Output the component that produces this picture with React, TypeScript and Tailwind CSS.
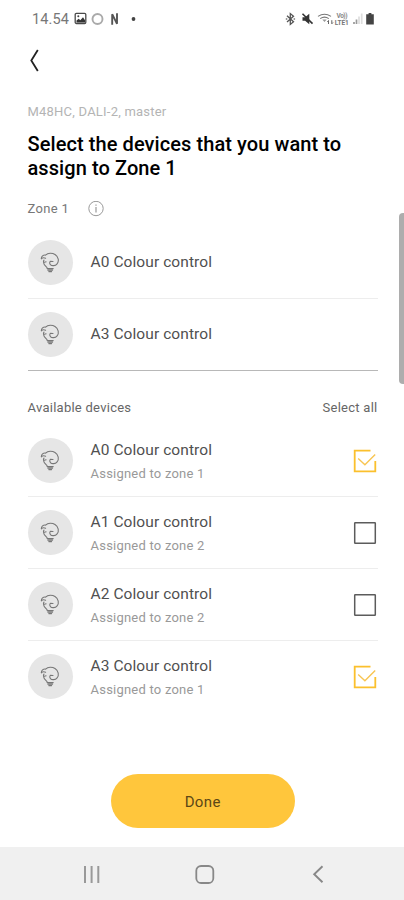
interface Device {
  name: string;
  zone: number;
}

const zoneDevices = ["A0 Colour control", "A3 Colour control"];

const availableDevices: Device[] = [
  { name: "A0 Colour control", zone: 1 },
  { name: "A1 Colour control", zone: 2 },
  { name: "A2 Colour control", zone: 2 },
  { name: "A3 Colour control", zone: 1 },
];

const StatusBar = () => (
  <div className="flex h-[38px] shrink-0 items-center pl-[32px] pr-[28px] text-[#555]">
    <span className="w-[42px] pt-[2px] text-[14.5px] leading-none tracking-[0.1px] whitespace-nowrap text-[#777]">
      14.54
    </span>
    <svg width="65" height="16" viewBox="0 0 65 16" fill="none">
      <rect x="1.2" y="2.3" width="10.6" height="10.2" rx="1.2" stroke="#4a4a4a" strokeWidth="1.3" />
      <path d="M2.5 11.5V9.5l2.2-1.7 1.6 1.4 2.7-3 2 3v2.3z" fill="#333" />
      <circle cx="4.3" cy="5.2" r="1" fill="#444" />
      <circle cx="23.5" cy="8" r="5" stroke="#aaa" strokeWidth="1.9" />
      <path d="M38.2 13.8V3.2l4.8 9.6V2.2" stroke="#555" strokeWidth="1.9" />
      <circle cx="59.5" cy="8" r="1.9" fill="#444" />
    </svg>
    <svg className="ml-auto" width="91" height="16" viewBox="0 0 91 16" fill="none">
      <path d="M2 4.8l6.5 6-3.2 2.6V2.6l3.2 2.6L2 11" stroke="#555" strokeWidth="1.3" />
      <path d="M.8 8h1.5M8.6 8h1.5" stroke="#777" strokeWidth="1.6" />
      <path d="M17.5 6.2h2.6l4.2-3.4v10.4l-4.2-3.4h-2.6z" fill="#333" />
      <path d="M17.5 2.8l10 9.8" stroke="#333" strokeWidth="1.6" />
      <path d="M33 5.4q6.5-4.4 13 0M35.2 7.6q4.3-3 8.6 0" stroke="#777" strokeWidth="1.1" />
      <path d="M37.3 8.6h4.4l-2.2 2.5z" fill="#999" />
      <path d="M43.5 13v-3.5l-1.2 1.3M46.8 9.2v3.6l1.2-1.3" stroke="#666" strokeWidth="1" />
      <text x="51.5" y="7.2" fill="#888" fontSize="6.5" fontWeight="700" textLength="11">Vo))</text>
      <text x="49.8" y="14" fill="#777" fontSize="6.5" fontWeight="700" textLength="14">LTE1</text>
      <path d="M69 11v2M71.5 8.5V13" stroke="#999" strokeWidth="1.7" />
      <path d="M74 5.5V13M76.7 2.5V13" stroke="#ddd" strokeWidth="1.7" />
      <path d="M81.2 3.2h2.4V2h2.8v1.2h2.4v10.4h-7.6z" fill="#444" />
    </svg>
  </div>
);

const BulbIcon = () => (
  <div className="flex size-[45px] shrink-0 items-center justify-center rounded-full bg-[#e6e6e6]">
    <svg width="22" height="24" viewBox="0 0 22 24" fill="none" stroke="#777" strokeWidth="1.1" strokeLinecap="round" strokeLinejoin="round">
      <path d="M2.4 7.7C2.2 5.2 4.3 3.8 6.6 4.1 9 1.7 13.2 1.7 16 3.5c3.6 2.4 4.3 6.6 2.1 9.3-1.8 2.2-5.2 2.4-6.7.8-.9-1-.8-2.3-.1-3.3l2.7.2" />
      <path d="M2.4 7.7c1.3-1.2 2.6-1.3 4.2-.5M5 9.2c-.6.7-.7 1.5-.4 2.3l2.5-.7M4.8 12.3c.5 2.1 2.6 3 3.5 4.9" />
      <path d="M8.2 17.6h6M8.8 19.1h4.8M9.8 20.6h2.8" />
    </svg>
  </div>
);

const Checkbox = ({ checked }: { checked: boolean }) => (
  <svg className="mr-[0.5px] ml-auto shrink-0" width="24" height="24" viewBox="0 0 24 24" fill="none">
    {checked ? (
      <>
        <path d="M17.5 1.7H1.7v20.6h20.6V12" stroke="#fbc02d" strokeWidth="1.8" />
        <path d="M5.2 9.5l6.7 6.3L22.2 5.4" stroke="#f8c552" strokeWidth="1.4" />
      </>
    ) : (
      <rect x="1.7" y="1.7" width="20.6" height="20.6" rx="0.5" stroke="#5c5c5c" strokeWidth="1.5" />
    )}
  </svg>
);

const NavigationBar = () => (
  <nav className="mt-auto h-[53px] shrink-0 bg-[#f0f0f0]">
    <svg width="404" height="53" viewBox="0 0 404 53" fill="none" stroke="#888">
      <path d="M85 19v17M91.6 19v17M98.3 19v17" stroke="#999" strokeWidth="2" />
      <rect x="196.3" y="19" width="17" height="17" rx="4.8" strokeWidth="1.8" />
      <path d="M322.5 19.3l-8.3 8 8.3 8" strokeWidth="1.9" />
    </svg>
  </nav>
);

export default function App() {
  return (
    <div className="relative flex h-[900px] w-[404px] flex-col overflow-hidden bg-white font-['Roboto',sans-serif] text-[#444]">
      <StatusBar />

      <main className="flex flex-col pl-[27.5px] pr-[26.5px]">
        <button type="button" aria-label="Back" className="flex h-[45px] items-center">
          <svg width="14" height="24" viewBox="0 0 14 24" fill="none">
            <path d="M9.8 1L3.3 11.5l6.5 10.5" stroke="#222" strokeWidth="1.8" />
          </svg>
        </button>

        <p className="mt-[19px] h-5 text-[13px] leading-5 tracking-[0.22px] whitespace-nowrap text-[#b4b4b4]">
          M48HC, DALI-2, master
        </p>
        <h1 className="mt-[10px] text-[20px] leading-6 font-medium tracking-[0.08px] whitespace-nowrap text-black">
          Select the devices that you want to
          <br />
          assign to Zone 1
        </h1>

        <div className="mt-[19px] flex h-5 items-center text-[13px] tracking-[0.35px] text-[#777]">
          <span className="w-[60.5px]">Zone 1</span>
          <svg width="16" height="16" viewBox="0 0 16 16" fill="none" stroke="#999">
            <circle cx="8" cy="7.5" r="7.2" strokeWidth="1" />
            <path d="M8 6V11.5M8 3.5v1.2" strokeWidth="1.2" />
          </svg>
        </div>

        <ul className="mt-2 border-b border-[#b8b8b8]">
          {zoneDevices.map((name) => (
            <li
              key={name}
              className="flex h-[72px] items-center border-b border-[#ededed] last:h-[71px] last:border-b-0"
            >
              <BulbIcon />
              <span className="ml-[18px] text-[15.5px] tracking-[0.08px] text-[#505050]">{name}</span>
            </li>
          ))}
        </ul>

        <div className="mt-[27px] flex h-5 items-center justify-between text-[13px] tracking-[0.26px] text-[#666]">
          <span>Available devices</span>
          <span>Select all</span>
        </div>

        <ul className="mt-[7px]">
          {availableDevices.map(({ name, zone }) => (
            <li
              key={name}
              className="flex h-[72px] items-center border-b border-[#ededed] last:border-b-transparent"
            >
              <BulbIcon />
              <div className="ml-[18px] pt-[3px]">
                <p className="text-[15.5px] leading-6 tracking-[0.08px] text-[#505050]">{name}</p>
                <p className="text-[13px] leading-6 tracking-[0.22px] text-[#999]">Assigned to zone {zone}</p>
              </div>
              <Checkbox checked={zone === 1} />
            </li>
          ))}
        </ul>

        <button
          type="button"
          className="mt-[61px] ml-[83px] h-[54px] w-[184.5px] rounded-full bg-[#ffc63c] pt-[2px] text-[15px] tracking-[0.4px] text-[#5c4716]"
        >
          Done
        </button>
      </main>

      <NavigationBar />

      {/* scroll indicator */}
      <div className="absolute top-[213px] right-0 h-[171px] w-[5px] rounded-l-[4px] bg-[#adadad]" />
    </div>
  );
}
